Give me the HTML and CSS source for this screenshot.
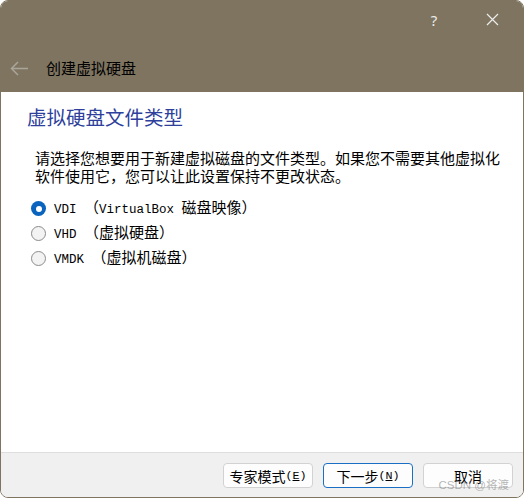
FILE: index.html
```html
<!DOCTYPE html>
<html lang="zh-CN">
<head>
<meta charset="utf-8">
<title>创建虚拟硬盘</title>
<link rel="stylesheet" href="styles.css">
</head>
<body>
<div class="window">
  <div class="titlebar">
    <div class="caption-row">
      <span class="caption-btn help">?</span>
      <span class="caption-btn close">
        <svg width="13" height="13" viewBox="0 0 13 13"><path d="M1 1 L12 12 M12 1 L1 12" stroke="#ececec" stroke-width="1.2" fill="none"/></svg>
      </span>
    </div>
    <div class="nav-row">
      <svg class="back" width="19" height="15" viewBox="0 0 19 15"><path d="M18 7.5 H1.5 M8 1 L1.5 7.5 L8 14" stroke="#aaa59b" stroke-width="1.5" fill="none"/></svg>
      <span class="title">创建虚拟硬盘</span>
    </div>
  </div>
  <div class="content">
    <h1 class="heading">虚拟硬盘文件类型</h1>
    <p class="desc">请选择您想要用于新建虚拟磁盘的文件类型。如果您不需要其他虚拟化软件使用它，您可以让此设置保持不更改状态。</p>
    <div class="options">
      <label class="option"><span class="radio checked"></span><span class="label"><span class="lat">VDI </span>（<span class="lat">VirtualBox </span>磁盘映像）</span></label>
      <label class="option"><span class="radio"></span><span class="label"><span class="lat">VHD </span>（虚拟硬盘）</span></label>
      <label class="option"><span class="radio"></span><span class="label"><span class="lat">VMDK </span>（虚拟机磁盘）</span></label>
    </div>
  </div>
  <div class="footer">
    <button class="btn">专家模式<span class="lat">(<u>E</u>)</span></button>
    <button class="btn default">下一步<span class="lat">(<u>N</u>)</span></button>
    <button class="btn">取消</button>
  </div>
  <div class="watermark">CSDN @将渡</div>
</div>
</body>
</html>
```

FILE: styles.css
```css
html, body {
  margin: 0;
  padding: 0;
  background: #ffffff;
}
body {
  font-family: "Noto Sans CJK SC", "Noto Sans", sans-serif;
}
.window {
  position: relative;
  width: 524px;
  height: 498px;
  box-sizing: border-box;
  border: 1px solid #7e7460;
  border-radius: 8px;
  overflow: hidden;
  display: flex;
  flex-direction: column;
  background: #ffffff;
}
.titlebar {
  background: #7e7460;
  height: 91px;
  display: flex;
  flex-direction: column;
  flex: none;
}
.caption-row {
  height: 37px;
  display: flex;
  justify-content: flex-end;
  align-items: center;
  padding-right: 16px;
  gap: 28px;
}
.caption-btn {
  display: flex;
  align-items: center;
  justify-content: center;
  width: 30px;
  height: 30px;
  color: #ececec;
}
.help {
  font-family: "Noto Sans", sans-serif;
  font-size: 15px;
}
.nav-row {
  flex: 1;
  display: flex;
  align-items: center;
  padding-top: 6px;
  padding-left: 9px;
}
.back {
  display: block;
}
.title {
  margin-left: 17px;
  font-size: 15px;
  color: #000;
  line-height: 20px;
}
.content {
  flex: 1;
  padding: 13px 0 0 26px;
}
.heading {
  margin: 0;
  font-size: 19.5px;
  font-weight: normal;
  line-height: 24px;
  color: #2e3f9c;
}
.desc {
  margin: 20px 0 0 8px;
  width: 470px;
  font-size: 15px;
  line-height: 18px;
  color: #000;
}
.options {
  margin-top: 11px;
  margin-left: 4px;
  display: flex;
  flex-direction: column;
}
.option {
  height: 25px;
  display: flex;
  align-items: center;
  font-size: 15px;
  color: #000;
}
.radio {
  width: 15px;
  height: 15px;
  box-sizing: border-box;
  border-radius: 50%;
  border: 1px solid #8b8b8b;
  background: #f3f3f3;
  flex: none;
  margin-right: 8px;
  position: relative;
}
.radio.checked {
  border: none;
  background: #0a64be;
}
.radio.checked::after {
  content: "";
  position: absolute;
  left: 4.5px;
  top: 4.5px;
  width: 6px;
  height: 6px;
  border-radius: 50%;
  background: #fff;
}
.label {
  line-height: 18px;
  white-space: nowrap;
}
.lat {
  font-family: "Liberation Mono", monospace;
  font-size: 12.5px;
}
.footer {
  flex: none;
  height: 45px;
  box-sizing: border-box;
  border-top: 1px solid #dedede;
  background: #f0f0f0;
  display: flex;
  justify-content: flex-end;
  align-items: flex-start;
  gap: 10px;
  padding: 10px 10px 0 0;
}
.btn {
  width: 90px;
  height: 25px;
  box-sizing: border-box;
  border: 1px solid #d2d2d2;
  border-radius: 4px;
  background: #fdfdfd;
  font-family: "Noto Sans CJK SC", sans-serif;
  font-size: 14px;
  color: #000;
  padding: 0;
  display: flex;
  align-items: center;
  justify-content: center;
  line-height: 18px;
}
.btn .lat {
  font-size: 11.7px;
}
.btn.default {
  border-color: #1a6fc4;
}
.watermark {
  position: absolute;
  right: 14px;
  bottom: 5px;
  font-family: "Liberation Sans", "Noto Sans CJK SC", sans-serif;
  font-size: 11.5px;
  color: rgba(120, 120, 120, 0.55);
  pointer-events: none;
}
```
